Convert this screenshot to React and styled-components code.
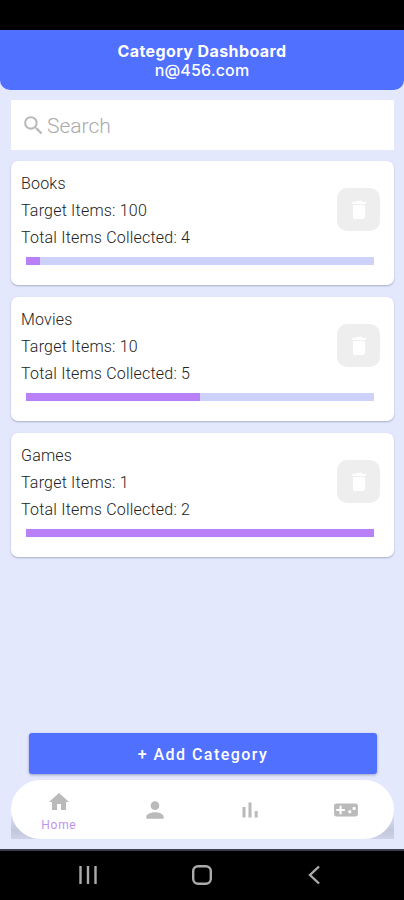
import React, { useState } from "react";
import styled, { createGlobalStyle } from "styled-components";
import {
  MdDelete,
  MdHome,
  MdPerson,
  MdSearch,
  MdVideogameAsset,
} from "react-icons/md";

const GlobalStyle = createGlobalStyle`
  * {
    box-sizing: border-box;
  }

  body {
    margin: 0;
    background-color: #000;
    font-family: Roboto, "Liberation Sans", sans-serif;
  }
`;

const Phone = styled.div`
  width: 404px;
  height: 900px;
  display: flex;
  flex-direction: column;
  overflow: hidden;
  background-color: #000;
`;

const StatusBar = styled.div`
  height: 30px;
  flex: none;
`;

const Screen = styled.div`
  flex: 1;
  display: flex;
  flex-direction: column;
  background-color: #e4e8fd;
  border-bottom: 2px solid #3c3c4a;
`;

const Header = styled.header`
  height: 60px;
  padding-top: 11px;
  background-color: #5070ff;
  border-radius: 0 0 10px 10px;
  color: #fff;
  text-align: center;
  font-family: Inter, sans-serif;
`;

const Title = styled.h1`
  margin: 0;
  font-size: 16px;
  font-weight: 700;
  line-height: 20px;
  letter-spacing: 0.4px;
`;

const Email = styled.div`
  font-size: 16px;
  font-weight: 500;
  line-height: 19px;
  letter-spacing: 0.15px;
`;

const SearchBar = styled.label`
  height: 50px;
  margin: 10px 10px 0 11px;
  padding-left: 10px;
  display: flex;
  align-items: center;
  background-color: #fff;
  color: #b9b9b9;
`;

const SearchInput = styled.input`
  flex: 1;
  min-width: 0;
  padding: 2px 0 0;
  margin-left: 1px;
  border: 0;
  outline: none;
  background: transparent;
  font-family: inherit;
  font-size: 21px;
  font-weight: 300;

  &::placeholder {
    color: #aaa;
    opacity: 1;
  }
`;

const CategoryList = styled.main`
  flex: 1;
  display: flex;
  flex-direction: column;
  gap: 12px;
  margin: 11px 10px 0 11px;
`;

const Card = styled.section`
  height: 124px;
  padding: 9px 14px 0 10px;
  background-color: #fff;
  border-radius: 7px;
  box-shadow: 0 1px 2px rgba(60, 60, 100, 0.35);
`;

const CardBody = styled.div`
  display: flex;
  justify-content: space-between;
`;

const Line = styled.div`
  color: #222;
  font-size: 16px;
  font-weight: 300;
  line-height: 27px;
  letter-spacing: 0.2px;
`;

const DeleteButton = styled.button`
  width: 43px;
  height: 43px;
  margin-top: 18px;
  padding: 0;
  display: flex;
  align-items: center;
  justify-content: center;
  border: 0;
  border-radius: 10px;
  background-color: #eee;
  color: #fff;
`;

const Track = styled.div`
  height: 8px;
  margin: 6px 6px 0 5px;
  background-color: #cdd2fc;
`;

const Fill = styled.div`
  height: 100%;
  background-color: #b980f8;
`;

const AddButton = styled.button`
  height: 41px;
  margin: 0 27px 0 29px;
  padding: 2px 0 0;
  flex: none;
  border: 0;
  border-radius: 3px;
  background-color: #5070ff;
  box-shadow: 0 1px 3px rgba(40, 50, 110, 0.4);
  color: #fff;
  font-family: inherit;
  font-size: 16px;
  font-weight: 500;
  letter-spacing: 1.45px;
`;

const NavShadow = styled.div`
  margin: 6px 10px 10px 11px;
  flex: none;
  background: linear-gradient(#e4e8fd 50%, #c3c7dc 85%, #cfd3e8);
`;

const Nav = styled.nav`
  height: 59px;
  display: grid;
  grid-template-columns: repeat(4, 1fr);
  background-color: #fff;
  border-radius: 30px;
`;

const NavItem = styled.button`
  padding: ${(props) => (props.$active ? "3px 0 0" : "0")};
  display: flex;
  flex-direction: column;
  align-items: center;
  justify-content: center;
  border: 0;
  background: transparent;
  color: #bababa;
  font-family: inherit;
`;

const NavLabel = styled.span`
  color: #bd94f3;
  font-size: 12px;
  line-height: 16px;
  letter-spacing: 0.7px;
  margin-top: 3px;
`;

const SystemBar = styled.div`
  height: 49px;
  flex: none;
  display: flex;
  align-items: center;
  justify-content: space-between;
  padding: 0 78px 2px 77px;
`;

const SystemIcon = styled.svg`
  width: 22px;
  height: 22px;
  fill: none;
  stroke: #ababab;
  stroke-width: 2.4;
`;

const categories = [
  { name: "Books", target: 100, collected: 4 },
  { name: "Movies", target: 10, collected: 5 },
  { name: "Games", target: 1, collected: 2 },
];

function StatsIcon({ size }) {
  return (
    <svg width={size} height={size} viewBox="0 0 24 24" fill="currentColor">
      <path d="M4.5 9h3v10.5h-3zM10.5 4.5h3v15h-3zM16.7 13h3v6.5h-3z" />
    </svg>
  );
}

const tabs = [
  { label: "Home", icon: MdHome, size: 24 },
  { label: "Profile", icon: MdPerson, size: 26 },
  { label: "Stats", icon: StatsIcon, size: 24 },
  { label: "Games", icon: MdVideogameAsset, size: 26 },
];

function CategoryCard({ name, target, collected }) {
  const progress = Math.min(100, (collected / target) * 100);

  return (
    <Card>
      <CardBody>
        <div>
          <Line>{name}</Line>
          <Line>Target Items: {target}</Line>
          <Line>Total Items Collected: {collected}</Line>
        </div>
        <DeleteButton>
          <MdDelete size={24} />
        </DeleteButton>
      </CardBody>
      <Track>
        <Fill style={{ width: `${progress}%` }} />
      </Track>
    </Card>
  );
}

function App() {
  const [active, setActive] = useState("Home");
  const [search, setSearch] = useState("");

  const shown = categories.filter((c) =>
    c.name.toLowerCase().includes(search.toLowerCase())
  );

  return (
    <Phone>
      <GlobalStyle />
      <StatusBar />
      <Screen>
        <Header>
          <Title>Category Dashboard</Title>
          <Email>n@456.com</Email>
        </Header>
        <SearchBar>
          <MdSearch size={25} />
          <SearchInput
            placeholder="Search"
            value={search}
            onChange={(e) => setSearch(e.target.value)}
          />
        </SearchBar>
        <CategoryList>
          {shown.map((c) => (
            <CategoryCard key={c.name} {...c} />
          ))}
        </CategoryList>
        <AddButton>+ Add Category</AddButton>
        <NavShadow>
          <Nav>
            {tabs.map(({ label, icon: Icon, size }) => (
              <NavItem
                key={label}
                $active={active === label}
                onClick={() => setActive(label)}
              >
                <Icon size={size} />
                {active === label && <NavLabel>{label}</NavLabel>}
              </NavItem>
            ))}
          </Nav>
        </NavShadow>
      </Screen>
      <SystemBar>
        <SystemIcon viewBox="0 0 22 22">
          <path d="M3.5 2v18M11 2v18M18.5 2v18" />
        </SystemIcon>
        <SystemIcon viewBox="0 0 22 22">
          <rect x="2.2" y="2.2" width="17.6" height="17.6" rx="5" />
        </SystemIcon>
        <SystemIcon viewBox="0 0 22 22">
          <path d="M15 2.5L6 11l9 8.5" />
        </SystemIcon>
      </SystemBar>
    </Phone>
  );
}

export default App;
